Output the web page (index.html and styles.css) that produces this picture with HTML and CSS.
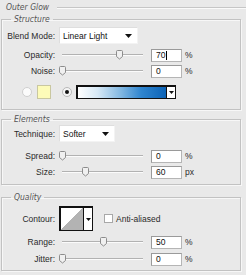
FILE: index.html
```html
<!DOCTYPE html>
<html>
<head>
<meta charset="utf-8">
<link rel="stylesheet" href="styles.css">
</head>
<body>
<div class="panel">
  <div class="title"><span class="title-text">Outer Glow</span><i class="rule"></i></div>

  <fieldset class="group structure">
    <legend>Structure</legend>
    <div class="row select-row">
      <span class="lbl">Blend Mode:</span>
      <div class="select blend"><span class="select-text">Linear Light</span><svg class="caret" width="7" height="4" viewBox="0 0 7 4"><polygon points="0,0 7,0 3.5,4" fill="#111"/></svg></div>
    </div>
    <div class="row slider-row first">
      <span class="lbl">Opacity:</span>
      <div class="slider"><svg class="thumb" style="left:calc(70% - 3px)" width="7" height="10" viewBox="0 0 7 10"><path d="M1.5 0.5h4a1 1 0 0 1 1 1v5l-3 2.5l-3-2.5v-5a1 1 0 0 1 1-1z" fill="#f0f0f0" stroke="#8c8c8c"/></svg></div>
      <div class="field">70<i class="cursor"></i></div>
      <span class="unit">%</span>
    </div>
    <div class="row slider-row">
      <span class="lbl">Noise:</span>
      <div class="slider"><svg class="thumb" style="left:calc(0% - 3px)" width="7" height="10" viewBox="0 0 7 10"><path d="M1.5 0.5h4a1 1 0 0 1 1 1v5l-3 2.5l-3-2.5v-5a1 1 0 0 1 1-1z" fill="#f0f0f0" stroke="#8c8c8c"/></svg></div>
      <div class="field">0</div>
      <span class="unit">%</span>
    </div>
    <div class="row color-row">
      <span class="radio"></span>
      <span class="swatch"></span>
      <span class="radio on"><i class="dot"></i></span>
      <div class="gradient"><span class="gradient-fill"></span><span class="drop"><svg width="5" height="3" viewBox="0 0 5 3"><polygon points="0,0 5,0 2.5,3" fill="#111"/></svg></span></div>
    </div>
  </fieldset>

  <fieldset class="group elements">
    <legend>Elements</legend>
    <div class="row select-row">
      <span class="lbl">Technique:</span>
      <div class="select technique"><span class="select-text">Softer</span><svg class="caret" width="7" height="4" viewBox="0 0 7 4"><polygon points="0,0 7,0 3.5,4" fill="#111"/></svg></div>
    </div>
    <div class="row slider-row first-el">
      <span class="lbl">Spread:</span>
      <div class="slider"><svg class="thumb" style="left:calc(0% - 3px)" width="7" height="10" viewBox="0 0 7 10"><path d="M1.5 0.5h4a1 1 0 0 1 1 1v5l-3 2.5l-3-2.5v-5a1 1 0 0 1 1-1z" fill="#f0f0f0" stroke="#8c8c8c"/></svg></div>
      <div class="field">0</div>
      <span class="unit">%</span>
    </div>
    <div class="row slider-row">
      <span class="lbl">Size:</span>
      <div class="slider"><svg class="thumb" style="left:calc(28% - 3px)" width="7" height="10" viewBox="0 0 7 10"><path d="M1.5 0.5h4a1 1 0 0 1 1 1v5l-3 2.5l-3-2.5v-5a1 1 0 0 1 1-1z" fill="#f0f0f0" stroke="#8c8c8c"/></svg></div>
      <div class="field">60</div>
      <span class="unit">px</span>
    </div>
  </fieldset>

  <fieldset class="group quality">
    <legend>Quality</legend>
    <div class="row contour-row">
      <span class="lbl">Contour:</span>
      <div class="contour"><span class="curve"></span><span class="drop"><svg width="5" height="3" viewBox="0 0 5 3"><polygon points="0,0 5,0 2.5,3" fill="#111"/></svg></span></div>
      <span class="check"></span>
      <span class="check-label">Anti-aliased</span>
    </div>
    <div class="row slider-row first-q">
      <span class="lbl">Range:</span>
      <div class="slider"><svg class="thumb" style="left:calc(50% - 3px)" width="7" height="10" viewBox="0 0 7 10"><path d="M1.5 0.5h4a1 1 0 0 1 1 1v5l-3 2.5l-3-2.5v-5a1 1 0 0 1 1-1z" fill="#f0f0f0" stroke="#8c8c8c"/></svg></div>
      <div class="field">50</div>
      <span class="unit">%</span>
    </div>
    <div class="row slider-row">
      <span class="lbl">Jitter:</span>
      <div class="slider"><svg class="thumb" style="left:calc(0% - 3px)" width="7" height="10" viewBox="0 0 7 10"><path d="M1.5 0.5h4a1 1 0 0 1 1 1v5l-3 2.5l-3-2.5v-5a1 1 0 0 1 1-1z" fill="#f0f0f0" stroke="#8c8c8c"/></svg></div>
      <div class="field">0</div>
      <span class="unit">%</span>
    </div>
  </fieldset>
</div>
</body>
</html>
```
FILE: styles.css
```css
html, body {
  margin: 0;
  padding: 0;
  background: #e9e9e9;
}
body {
  font-family: "Liberation Sans", Arial, sans-serif;
  font-size: 8.5px;
  color: #2a2a2a;
}
.panel {
  width: 246px;
  height: 275px;
  overflow: hidden;
}
.title {
  display: flex;
  align-items: center;
  height: 14px;
  padding-left: 6px;
}
.title-text,
legend {
  font-family: "DejaVu Sans Condensed", "DejaVu Sans", sans-serif;
  font-style: italic;
  font-size: 8.5px;
  color: #555;
  line-height: 10px;
}
.rule {
  flex: 1;
  margin-left: 8px;
  margin-top: 2px;
  border-top: 1px solid #c6c6c6;
  border-bottom: 1px solid #fafafa;
}
.group {
  margin: 0 5px 0 1px;
  padding: 0 0 10px 0;
  border: 1px solid #c2c2c2;
  box-shadow: inset 1px 1px 0 #f7f7f7, 1px 1px 0 #f7f7f7;
  min-width: 0;
}
legend {
  margin-left: 9px;
  padding: 0 3px;
}
.row {
  display: flex;
  align-items: center;
}
.lbl {
  flex: none;
  width: 53px;
  margin-right: 4px;
  text-align: right;
  white-space: nowrap;
}
.select {
  display: flex;
  align-items: center;
  justify-content: space-between;
  height: 17px;
  box-sizing: border-box;
  background: #fff;
  border: 1px solid #f3f3f3;
  border-top-color: #dedede;
  border-left-color: #dedede;
  padding: 0 5px 0 3px;
}
.select-text {
  color: #111;
}
.structure {
  padding-top: 3px;
}
.blend {
  width: 79px;
}
.technique {
  width: 56px;
}
.slider-row {
  height: 12px;
  margin-top: 4px;
}
.slider-row.first {
  margin-top: 5px;
}
.slider {
  position: relative;
  flex: none;
  width: 81px;
  height: 12px;
  margin-left: 3px;
  margin-right: 8px;
}
.slider::before {
  content: "";
  position: absolute;
  left: 0;
  right: 0;
  top: 5px;
  border-top: 1px solid #b2b2b2;
  border-bottom: 1px solid #fbfbfb;
}
.thumb {
  position: absolute;
  top: 1px;
}
.field {
  flex: none;
  display: flex;
  align-items: center;
  width: 31px;
  height: 13px;
  box-sizing: border-box;
  padding-left: 4px;
  background: #fff;
  border: 1px solid #b5b5b5;
  border-top-color: #9a9a9a;
  border-left-color: #9a9a9a;
  color: #111;
}
.cursor {
  display: inline-block;
  width: 0;
  height: 9px;
  margin-left: 1px;
  border-left: 1px solid #000;
}
.unit {
  margin-left: 3px;
}
.color-row {
  margin-top: 8px;
  height: 14px;
}
.radio {
  flex: none;
  display: flex;
  align-items: center;
  justify-content: center;
  width: 10px;
  height: 10px;
  box-sizing: border-box;
  border-radius: 50%;
  background: #fbfbfb;
  border: 1px solid #cfcfcf;
  margin-left: 20px;
}
.radio.on {
  margin-left: 11px;
  background: #f4f4f4;
  border-color: #b8b8b8;
}
.dot {
  width: 4px;
  height: 4px;
  border-radius: 50%;
  background: #111;
}
.swatch {
  flex: none;
  width: 14px;
  height: 14px;
  box-sizing: border-box;
  margin-left: 5px;
  background: #fdfbb8;
  border: 1px solid #c9c7a0;
}
.gradient {
  flex: none;
  display: flex;
  width: 100px;
  height: 14px;
  box-sizing: border-box;
  margin-left: 4px;
  border: 1px solid #111;
  border-top-width: 2px;
  border-left-width: 2px;
  background: #fff;
}
.gradient-fill {
  flex: 1;
  background: linear-gradient(to right, #ffffff 0%, #d7e9f6 22%, #84b9e2 48%, #2f85cf 72%, #0c63b6 100%);
}
.drop {
  flex: none;
  display: flex;
  align-items: center;
  justify-content: center;
  width: 8px;
  border-left: 1px solid #111;
  background: #fff;
}
.elements {
  margin-top: 4px;
  padding-top: 1px;
  padding-bottom: 6px;
}
.slider-row.first-el {
  margin-top: 8px;
}
.quality {
  margin-top: 7px;
  padding-top: 4px;
  padding-bottom: 5px;
}
.contour-row {
  height: 25px;
}
.contour {
  flex: none;
  display: flex;
  width: 34px;
  height: 25px;
  box-sizing: border-box;
  border: 2px solid #111;
  border-right-width: 1px;
  border-bottom-width: 1px;
}
.curve {
  flex: 1;
  background: linear-gradient(to top left, #b3b3b3 50%, #ffffff 50%);
}
.check {
  flex: none;
  width: 9px;
  height: 9px;
  box-sizing: border-box;
  margin-left: 11px;
  background: #fff;
  border: 1px solid #a8a8a8;
}
.check-label {
  margin-left: 3px;
}
.slider-row.first-q {
  margin-top: 5px;
}
.quality .slider-row {
  margin-top: 5px;
}
```
